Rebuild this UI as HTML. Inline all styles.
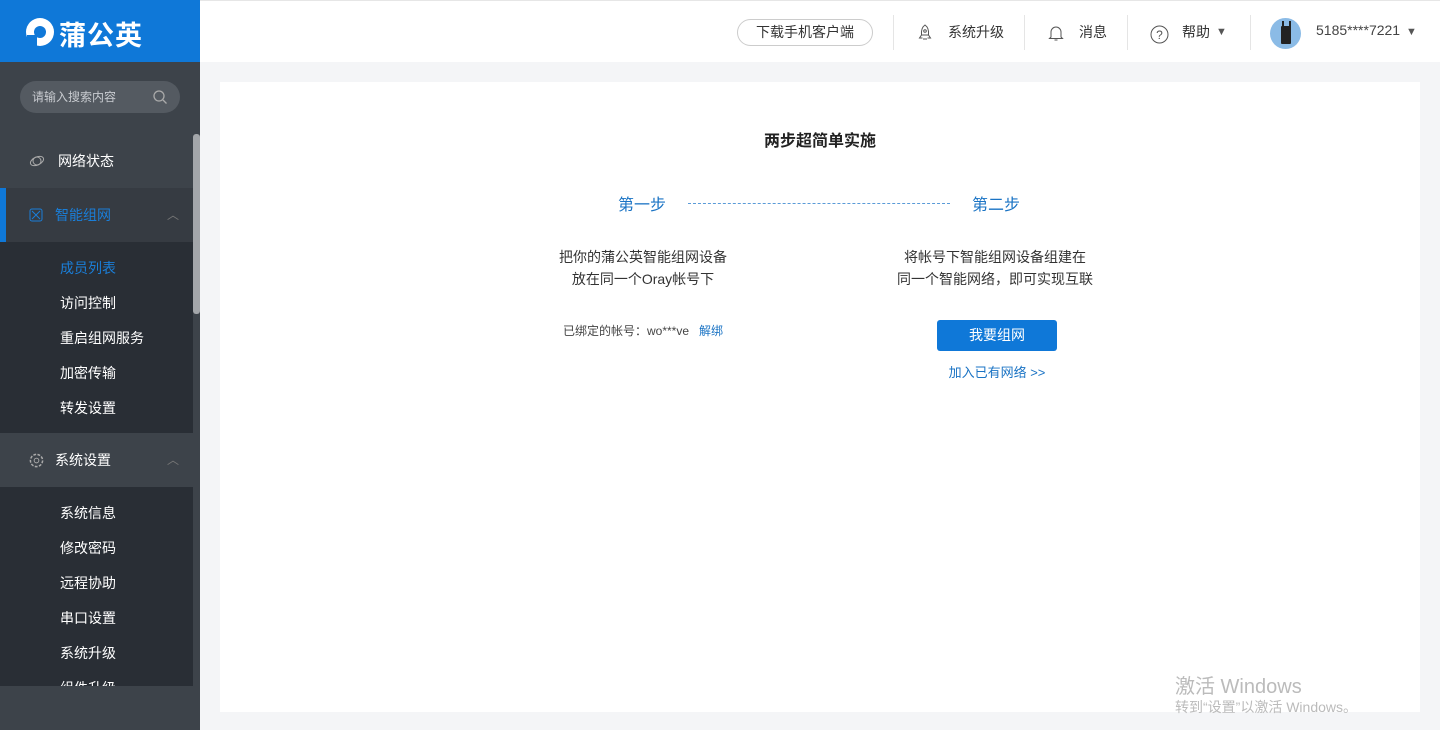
<!DOCTYPE html>
<html><head><meta charset="utf-8"><style>
*{margin:0;padding:0;box-sizing:border-box}
body{width:1440px;height:730px;overflow:hidden;background:#f4f5f7;font-family:"Liberation Sans","Noto Sans CJK SC",sans-serif;position:relative;font-size:14px}
.a{position:absolute}
#side{left:0;top:62px;width:200px;height:668px;background:#3d434a}
#logo{left:0;top:0;width:200px;height:62px;background:#0f78d8;color:#fff;font-size:27px;font-weight:bold}
.mi{position:absolute;left:0;width:193px;height:54px;color:#fff;font-size:14px;line-height:54px}
.sub{position:absolute;left:0;width:193px;background:#292e35}
.si{position:absolute;left:60px;color:#fff;font-size:14px}
#top{left:200px;top:0;width:1240px;height:62px;background:#fff;border-top:1px solid #e6e6e6}
.tx{position:absolute;color:#333;font-size:14px;top:21px}
.sep{position:absolute;top:14px;width:1px;height:35px;background:#e5e5e5}
#card{left:220px;top:82px;width:1200px;height:630px;background:#fff}
.c{position:absolute;color:#333;font-size:14px;text-align:center}
</style></head><body>
<div class="a" id="logo">
<svg class="a" style="left:25px;top:17px" width="30" height="30" viewBox="0 0 30 30"><circle cx="15" cy="15" r="14" fill="#fff"/><circle cx="15" cy="15" r="6" fill="#0f78d8"/><rect x="2" y="18" width="10" height="12" fill="#0f78d8"/></svg>
<span class="a" style="left:59px;top:14px;letter-spacing:1px">蒲公英</span></div>
<div class="a" id="side">
<div class="a" style="left:20px;top:19px;width:160px;height:32px;border-radius:16px;background:#545a61;color:#c8cbd0;font-size:12px;line-height:32px;padding-left:12px">请输入搜索内容
<svg class="a" style="left:132px;top:8px" width="16" height="16" viewBox="0 0 16 16"><circle cx="7" cy="7" r="5" stroke="#aaa" stroke-width="1.3" fill="none"/><path d="M11 11l3.5 3.5" stroke="#aaa" stroke-width="1.3"/></svg></div>
<div class="a" style="left:193px;top:72px;width:7px;height:180px;background:#a3a6aa;border-radius:3px"></div>
<div class="mi" style="top:72px"><svg class="a" style="left:29px;top:20px" width="16" height="14" viewBox="0 0 16 14"><ellipse cx="8" cy="7" rx="7" ry="4" transform="rotate(-25 8 7)" stroke="#aaa" fill="none"/><circle cx="8" cy="7" r="4" stroke="#aaa" fill="none"/></svg><span class="a" style="left:58px">网络状态</span></div>
<div class="mi" style="top:126px;background:#363b42;color:#1a7ed8"><div class="a" style="left:0;top:0;width:6px;height:54px;background:#0f78d8"></div><svg class="a" style="left:29px;top:20px" width="14" height="14" viewBox="0 0 14 14"><rect x="1" y="1" width="12" height="12" rx="2" stroke="#1a7ed8" fill="none"/><path d="M3 3l8 8M11 3l-8 8" stroke="#1a7ed8"/></svg><span class="a" style="left:55px">智能组网</span><span class="a" style="left:167px;color:#777;font-size:12px">︿</span></div>
<div class="sub" style="top:180px;height:191px">
<span class="si" style="top:16px;color:#1a7ed8">成员列表</span><span class="si" style="top:51px">访问控制</span><span class="si" style="top:86px">重启组网服务</span><span class="si" style="top:121px">加密传输</span><span class="si" style="top:156px">转发设置</span></div>
<div class="mi" style="top:371px"><svg class="a" style="left:29px;top:20px" width="15" height="15" viewBox="0 0 16 16"><circle cx="8" cy="8" r="6.5" stroke="#aaa" stroke-dasharray="3 1.5" fill="none" stroke-width="1.6"/><circle cx="8" cy="8" r="2.5" stroke="#aaa" fill="none"/></svg><span class="a" style="left:55px">系统设置</span><span class="a" style="left:167px;color:#777;font-size:12px">︿</span></div>
<div class="sub" style="top:425px;height:199px">
<span class="si" style="top:16px">系统信息</span><span class="si" style="top:51px">修改密码</span><span class="si" style="top:86px">远程协助</span><span class="si" style="top:121px">串口设置</span><span class="si" style="top:156px">系统升级</span><span class="si" style="top:191px;height:8px;overflow:hidden">组件升级</span></div>
</div>
<div class="a" id="top">
<div class="a" style="left:537px;top:18px;width:136px;height:27px;border:1px solid #ccc;border-radius:14px;font-size:14px;color:#333;text-align:center;line-height:25px">下载手机客户端</div>
<div class="sep" style="left:693px"></div>
<svg class="a" style="left:717px;top:23px" width="16" height="18" viewBox="0 0 16 18"><path d="M8 1c3 2 4 5 3.5 10h-7C4 6 5 3 8 1z M4.5 11l-2 3h3 M11.5 11l2 3h-3 M6 15h4" stroke="#555" fill="none"/><circle cx="8" cy="7" r="1.3" stroke="#555" fill="none"/></svg>
<span class="tx" style="left:748px">系统升级</span>
<div class="sep" style="left:824px"></div>
<svg class="a" style="left:848px;top:23px" width="16" height="18" viewBox="0 0 16 18"><path d="M3 13V8a5 5 0 0 1 10 0v5l1.5 1.5h-13z M6.5 16h3" stroke="#555" fill="none"/></svg>
<span class="tx" style="left:879px">消息</span>
<div class="sep" style="left:927px"></div>
<svg class="a" style="left:950px;top:24px" width="19" height="19" viewBox="0 0 19 19"><circle cx="9.5" cy="9.5" r="8.5" stroke="#555" fill="none"/><text x="9.5" y="14" font-size="12" text-anchor="middle" fill="#555" font-family="Liberation Sans">?</text></svg>
<span class="tx" style="left:982px">帮助</span><span class="tx" style="left:1016px;font-size:11px;top:25px;color:#555">▼</span>
<div class="sep" style="left:1050px"></div>
<div class="a" style="left:1070px;top:17px;width:31px;height:31px;border-radius:50%;background:#8bbbe6"><div class="a" style="left:11px;top:8px;width:10px;height:18px;background:#222;border-radius:1px"></div><div class="a" style="left:12px;top:3px;width:1.5px;height:6px;background:#222"></div><div class="a" style="left:19px;top:3px;width:1.5px;height:6px;background:#222"></div></div>
<span class="tx" style="left:1116px;color:#444">5185****7221</span><span class="tx" style="left:1206px;font-size:11px;top:25px;color:#555">▼</span>
</div>
<div class="a" id="card">
<div class="c" style="left:0;width:1200px;top:45px;font-size:16px;font-weight:bold;color:#222">两步超简单实施</div>
<div class="c" style="left:398px;top:109px;font-size:16px;color:#1a73c4">第一步</div>
<div class="a" style="left:468px;top:121px;width:262px;border-top:1px dashed #5a9bd8"></div>
<div class="c" style="left:752px;top:109px;font-size:16px;color:#1a73c4">第二步</div>
<div class="c" style="left:323px;width:200px;top:164px;line-height:22px">把你的蒲公英智能组网设备<br>放在同一个Oray帐号下</div>
<div class="c" style="left:650px;width:250px;top:164px;line-height:22px">将帐号下智能组网设备组建在<br>同一个智能网络，即可实现互联</div>
<div class="a" style="left:343px;top:240px;font-size:12px;color:#444">已绑定的帐号：wo***ve&nbsp;&nbsp;&nbsp;<span style="color:#1a73c4">解绑</span></div>
<div class="a" style="left:717px;top:238px;width:120px;height:31px;background:#0f78d8;border-radius:3px;color:#fff;font-size:14px;text-align:center;line-height:31px">我要组网</div>
<div class="c" style="left:700px;width:154px;top:280px;color:#1a73c4;font-size:13px">加入已有网络 &gt;&gt;</div>
</div>
<div class="a" style="left:1175px;top:670px;color:#bbb;font-size:20px">激活 Windows</div>
<div class="a" style="left:1175px;top:697px;color:#bbb;font-size:14px">转到“设置”以激活 Windows。</div>
</body></html>
